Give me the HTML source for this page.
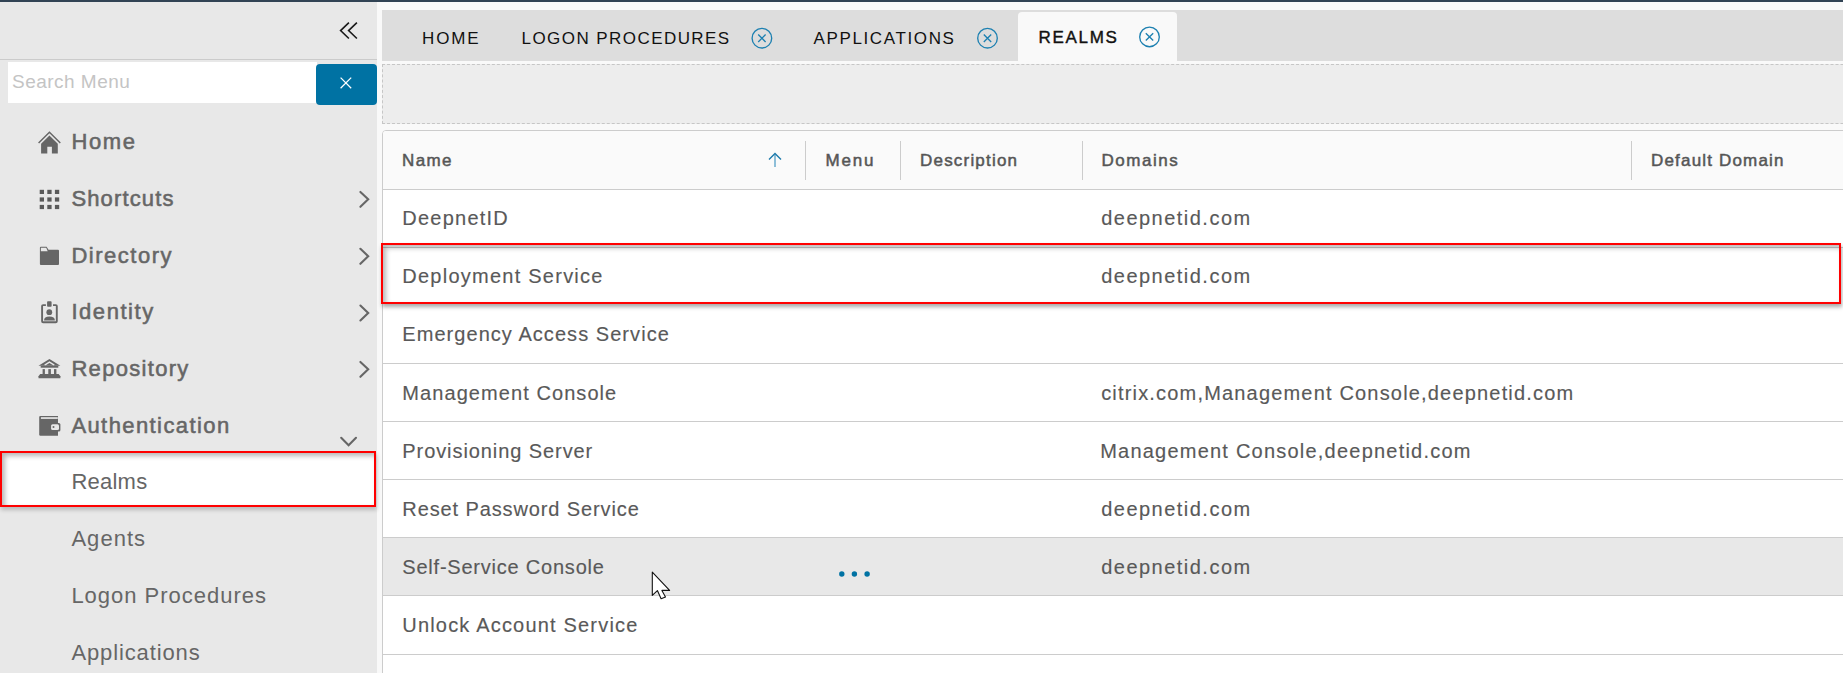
<!DOCTYPE html>
<html><head><meta charset="utf-8">
<style>
*{box-sizing:border-box;margin:0;padding:0}
html,body{width:1843px;height:673px;overflow:hidden;background:#f9f9f9;font-family:"Liberation Sans",sans-serif}
.a{position:absolute}
.t{position:absolute;white-space:nowrap;line-height:1}
#topbar{left:0;top:0;width:1843px;height:2px;background:#314354}
#side{left:0;top:2px;width:377px;height:671px;background:#e8e8e8}
#sidehdr{left:0;top:59px;width:377px;height:1px;background:#cbcbcb}
#search{left:8px;top:62px;width:309px;height:41px;background:#fff}
#sbtn{left:316px;top:64px;width:61px;height:41px;background:#0072a3;border-radius:4px}
.nav{color:#666;font-weight:normal;font-size:22px;-webkit-text-stroke:0.55px #666}
.sub{color:#666;font-weight:normal;font-size:22px}
#tabbar{left:382px;top:10px;width:1461px;height:51px;background:#dddddd}
#acttab{left:1018px;top:12px;width:159px;height:52px;background:#f9f9f9;border-radius:4px 4px 0 0}
.tab{color:#111;font-size:17px;letter-spacing:1.6px}
#dash{left:382px;top:64px;width:1921px;height:60px;background:#ededed;border:1px dashed #c6c6c6}
#card{left:382px;top:130px;width:1470px;height:560px;background:#fff;border:1px solid #cccccc;border-radius:4px}
#thead{left:383px;top:131px;width:1460px;height:58px;background:#fafafa;border-radius:3px 0 0 0}
.hl{position:absolute;left:383px;width:1460px;height:1px;background:#cccccc}
.sep{position:absolute;top:141px;width:1px;height:39px;background:#cccccc}
.th{color:#565656;font-weight:normal;font-size:17px;-webkit-text-stroke:0.5px #565656}
.td{color:#595959;font-size:20px;-webkit-text-stroke:0.15px #595959}
.redbox{position:absolute;border:2px solid #ff0000;box-shadow:1px 3px 4px rgba(0,0,0,.34), inset 3px 3px 5px rgba(0,0,0,.28)}
</style></head><body>
<div id="topbar" class="a"></div>
<div id="side" class="a"></div>
<div id="sidehdr" class="a"></div>
<!-- collapse chevrons -->
<svg class="a" style="left:332px;top:14px" width="32" height="32" viewBox="332 14 32 32"><polyline points="348.9,22.7 340.6,30.6 348.9,38.5" fill="none" stroke="#1a1a1a" stroke-width="1.6"/><polyline points="356.9,22.7 348.6,30.6 356.9,38.5" fill="none" stroke="#1a1a1a" stroke-width="1.6"/></svg>
<div id="search" class="a"></div>
<div class="t" style="left:12px;top:72px;font-size:19px;color:#c4c4c4;letter-spacing:0.48px">Search Menu</div>
<div id="sbtn" class="a"></div>
<svg class="a" style="left:330px;top:67px" width="32" height="32" viewBox="330 67 32 32"><path d="M340.6,77.6 L351.2,88.2 M351.2,77.6 L340.6,88.2" stroke="#fff" stroke-width="1.25" fill="none"/></svg>

<!-- nav items -->
<div class="t nav" style="left:71.4px;top:131.1px;letter-spacing:1.60px">Home</div>
<div class="t nav" style="left:71.4px;top:187.8px;letter-spacing:1.14px">Shortcuts</div>
<div class="t nav" style="left:71.4px;top:244.5px;letter-spacing:1.52px">Directory</div>
<div class="t nav" style="left:71.4px;top:301.2px;letter-spacing:1.56px">Identity</div>
<div class="t nav" style="left:71.4px;top:357.9px;letter-spacing:1.31px">Repository</div>
<div class="t nav" style="left:71.4px;top:414.7px;letter-spacing:1.41px">Authentication</div>

<div class="redbox" style="left:0;top:451px;width:376px;height:56px;background:#fff;box-shadow:1px 3px 4px rgba(0,0,0,.2), inset 3px 3px 5px rgba(0,0,0,.28)"></div>
<div class="t sub" style="left:71.4px;top:471.4px;letter-spacing:0.24px">Realms</div>
<div class="t sub" style="left:71.4px;top:528.1px;letter-spacing:1.04px">Agents</div>
<div class="t sub" style="left:71.4px;top:584.8px;letter-spacing:0.99px">Logon Procedures</div>
<div class="t sub" style="left:71.4px;top:641.5px;letter-spacing:0.88px">Applications</div>

<!-- icons -->
<svg class="a" style="left:34px;top:126px" width="32" height="32" viewBox="0 0 32 32"><polyline points="4.6,17.1 15.45,6.3 26.3,17.1" fill="none" stroke="#666" stroke-width="1.45" stroke-linejoin="miter"/><path d="M7.1,17.8 L15.45,9.5 L23.8,17.8 V27.4 H17.9 V20.7 H13.3 V27.4 H7.1 Z" fill="#666"/></svg>
<svg class="a" style="left:34px;top:184px" width="32" height="32" viewBox="0 0 32 32" fill="#5a5a5a"><rect x="5.7" y="5.8" width="4.3" height="4.2"/><rect x="13.3" y="5.8" width="4.3" height="4.2"/><rect x="20.9" y="5.8" width="4.3" height="4.2"/><rect x="5.7" y="13.4" width="4.3" height="4.2"/><rect x="13.3" y="13.4" width="4.3" height="4.2"/><rect x="20.9" y="13.4" width="4.3" height="4.2"/><rect x="5.7" y="20.9" width="4.3" height="4.2"/><rect x="13.3" y="20.9" width="4.3" height="4.2"/><rect x="20.9" y="20.9" width="4.3" height="4.2"/></svg>
<svg class="a" style="left:34px;top:240px" width="32" height="32" viewBox="0 0 32 32"><path d="M6.9,6.7 H12.6 L14.5,9.8 H24 Q25,9.8 25,10.8 V24 Q25,25 24,25 H6.9 Q5.9,25 5.9,24 V7.7 Q5.9,6.7 6.9,6.7 Z" fill="#666"/><path d="M6.9,7.8 H12.2 L13.7,11.2 H6.9 Z" fill="#e8e8e8"/></svg>
<svg class="a" style="left:34px;top:296px" width="32" height="32" viewBox="0 0 32 32"><path d="M11.9,9.1 H9.1 Q8.1,9.1 8.1,10.1 V25.3 Q8.1,26.3 9.1,26.3 H21.8 Q22.8,26.3 22.8,25.3 V10.1 Q22.8,9.1 21.8,9.1 H19" fill="none" stroke="#666" stroke-width="1.9"/><rect x="13.1" y="5.2" width="4.5" height="5.5" rx="0.8" fill="#666"/><circle cx="15.3" cy="16.2" r="2.9" fill="#666"/><path d="M10,24.4 Q10,20.4 15.45,20.4 Q20.9,20.4 20.9,24.4 Z" fill="#666"/></svg>
<svg class="a" style="left:34px;top:352px" width="32" height="32" viewBox="0 0 32 32" fill="#666"><path d="M15.45,6.9 L26.4,13.8 H4.5 Z"/><polyline points="10.6,13.1 15.45,10.1 20.3,13.1" fill="none" stroke="#e8e8e8" stroke-width="1.3"/><rect x="6.7" y="13.7" width="17.6" height="2"/><rect x="8.6" y="17.1" width="2.3" height="5.3"/><rect x="14.3" y="17.1" width="2.6" height="5.3"/><rect x="20" y="17.1" width="2.4" height="5.3"/><path d="M6.2,22.1 H24.7 L26.4,24.2 V26.2 H4.5 V24.2 Z"/></svg>
<svg class="a" style="left:34px;top:410px" width="32" height="32" viewBox="0 0 32 32"><path d="M6.4,5.9 H24 V25.7 H6.4 Q5.2,25.7 5.2,24.5 V7.1 Q5.2,5.9 6.4,5.9 Z" fill="#666"/><rect x="6.9" y="7.1" width="16.9" height="1.9" fill="#d8d8d8"/><rect x="16.4" y="13.1" width="10" height="8.5" rx="1.5" fill="#666"/><rect x="17.1" y="14.3" width="7.9" height="5.7" rx="1.5" fill="#e8e8e8"/><circle cx="19.5" cy="17.1" r="1" fill="#666"/></svg>

<!-- right chevrons -->
<svg class="a" style="left:348px;top:0" width="32" height="420" viewBox="348 0 32 420" fill="none" stroke="#666" stroke-width="2.1" stroke-linecap="round"><polyline points="360.4,191.9 368.2,199.3 360.4,206.8"/><polyline points="360.4,248.8 368.2,256.2 360.4,263.8"/><polyline points="360.4,305.5 368.2,312.9 360.4,320.4"/><polyline points="360.4,361.9 368.2,369.2 360.4,376.8"/></svg>
<svg class="a" style="left:332px;top:428px" width="32" height="24" viewBox="332 428 32 24"><polyline points="341.2,437.8 348.6,445.3 356,437.8" fill="none" stroke="#666" stroke-width="2.1" stroke-linecap="round"/></svg>

<!-- tabs -->
<div id="tabbar" class="a"></div>
<div id="acttab" class="a"></div>
<div class="t tab" style="left:422px;top:29.5px;letter-spacing:1.9px">HOME</div>
<div class="t tab" style="left:521.5px;top:29.5px;letter-spacing:1.44px">LOGON PROCEDURES</div>
<div class="t tab" style="left:813.5px;top:29.5px;letter-spacing:1.63px">APPLICATIONS</div>
<div class="t tab" style="left:1038.5px;top:28.6px;letter-spacing:1.7px;-webkit-text-stroke:0.4px #111">REALMS</div>
<svg class="a" style="left:740px;top:16px" width="44" height="44" viewBox="740 16 44 44" fill="none" stroke="#1d80b1" stroke-width="1.35"><circle cx="761.9" cy="38.2" r="9.8"/><path d="M758.2,34.5 L765.6,41.9 M765.6,34.5 L758.2,41.9"/></svg>
<svg class="a" style="left:966px;top:16px" width="44" height="44" viewBox="966 16 44 44" fill="none" stroke="#1d80b1" stroke-width="1.35"><circle cx="987.5" cy="38.2" r="9.8"/><path d="M983.8,34.5 L991.2,41.9 M991.2,34.5 L983.8,41.9"/></svg>
<svg class="a" style="left:1128px;top:15px" width="44" height="44" viewBox="1128 15 44 44" fill="none" stroke="#1d80b1" stroke-width="1.35"><circle cx="1149.5" cy="36.9" r="9.8"/><path d="M1145.8,33.2 L1153.2,40.6 M1153.2,33.2 L1145.8,40.6"/></svg>

<div id="dash" class="a"></div>
<div id="card" class="a"></div>
<div id="thead" class="a"></div>
<div class="hl" style="top:189px"></div>
<div class="sep" style="left:805px"></div>
<div class="sep" style="left:900px"></div>
<div class="sep" style="left:1082px"></div>
<div class="sep" style="left:1631px"></div>
<div class="t th" style="left:402px;top:151.5px;letter-spacing:1.37px">Name</div>
<div class="t th" style="left:825.5px;top:151.5px;letter-spacing:1.8px">Menu</div>
<div class="t th" style="left:920px;top:151.5px;letter-spacing:1.2px">Description</div>
<div class="t th" style="left:1101.5px;top:151.5px;letter-spacing:1.53px">Domains</div>
<div class="t th" style="left:1651px;top:151.5px;letter-spacing:1.18px">Default Domain</div>
<svg class="a" style="left:760px;top:146px" width="30" height="28" viewBox="760 146 30 28" fill="none" stroke-width="1.4"><path d="M775,154.5 V167" stroke="#5ea4c9"/><path d="M769,159.4 L775,153.4 L781,159.4" stroke="#1b78aa"/></svg>

<!-- rows -->
<div class="a" style="left:383px;top:538px;width:1460px;height:57px;background:#e8e8e8"></div>
<div class="hl" style="top:247px"></div>

<div class="hl" style="top:363px"></div>
<div class="hl" style="top:421px"></div>
<div class="hl" style="top:479px"></div>
<div class="hl" style="top:537px"></div>
<div class="hl" style="top:595px"></div>
<div class="hl" style="top:654px"></div>

<div class="t td" style="left:402.3px;top:208px;letter-spacing:1.238px">DeepnetID</div>
<div class="t td" style="left:1101.2px;top:208px;letter-spacing:1.48px">deepnetid.com</div>
<div class="t td" style="left:402.3px;top:266px;letter-spacing:1.245px">Deployment Service</div>
<div class="t td" style="left:1101.2px;top:266px;letter-spacing:1.48px">deepnetid.com</div>
<div class="t td" style="left:402.3px;top:324px;letter-spacing:1.052px">Emergency Access Service</div>
<div class="t td" style="left:402.3px;top:383px;letter-spacing:1.075px">Management Console</div>
<div class="t td" style="left:1101.2px;top:383px;letter-spacing:1.18px">citrix.com,Management Console,deepnetid.com</div>
<div class="t td" style="left:402.3px;top:441px;letter-spacing:0.919px">Provisioning Server</div>
<div class="t td" style="left:1100.2px;top:441px;letter-spacing:1.22px">Management Console,deepnetid.com</div>
<div class="t td" style="left:402.3px;top:499px;letter-spacing:0.888px">Reset Password Service</div>
<div class="t td" style="left:1101.2px;top:499px;letter-spacing:1.48px">deepnetid.com</div>
<div class="t td" style="left:402.3px;top:557px;letter-spacing:0.782px">Self-Service Console</div>
<div class="t td" style="left:1101.2px;top:557px;letter-spacing:1.48px">deepnetid.com</div>
<div class="t td" style="left:402.3px;top:615px;letter-spacing:1.188px">Unlock Account Service</div>

<svg class="a" style="left:830px;top:564px" width="50" height="20" viewBox="830 564 50 20" fill="#0072a3"><circle cx="841.8" cy="574" r="2.7"/><circle cx="854.4" cy="574" r="2.7"/><circle cx="867.1" cy="574" r="2.7"/></svg>

<div class="redbox" style="left:381px;top:243px;width:1460px;height:61px"></div>

<!-- cursor -->
<svg class="a" style="left:648px;top:568px" width="30" height="36" viewBox="648 568 30 36"><path d="M652.3,572.2 V595.4 L657.4,590.6 L661.1,598.8 L665.5,596.9 L661.9,590.4 L669.6,590.4 Z" fill="#fff" stroke="#111" stroke-width="1.1" stroke-linejoin="round"/></svg>
</body></html>
